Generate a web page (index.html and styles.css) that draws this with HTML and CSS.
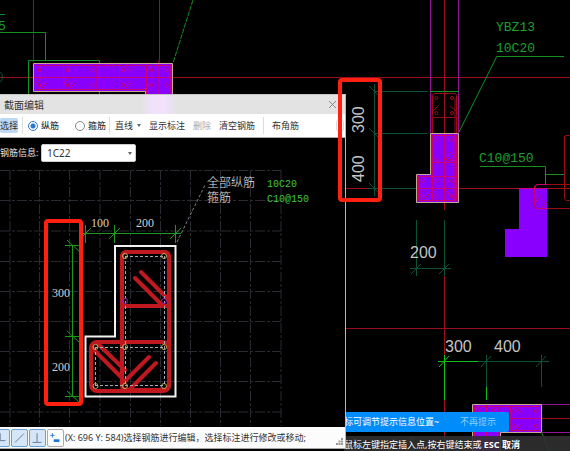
FILE: index.html
```html
<!DOCTYPE html>
<html lang="zh-CN">
<head>
<meta charset="utf-8">
<title>截面编辑</title>
<link rel="stylesheet" href="styles.css">
</head>
<body>
<main class="workspace">
  <svg class="drawing" viewBox="0 0 570 451" preserveAspectRatio="xMinYMin slice" aria-label="柱平面图">
    <!-- axes -->
    <g class="axis">
      <path d="M0 77.500H570M346 188.500H368M458 188.500H570M346 328.500H570M444.500 0V210M444.500 275V355M444.500 400V451"/>
    </g>
    <!-- upper left wall -->
    <path class="teal" d="M33.500 0V62M159.500 0V60"/>
    <path class="green" d="M0 32.500H45.500V60M28.500 94V60.500H99.500V94M0 14.500H5"/>
    <circle class="teal" cx="-4" cy="77" r="6.500"/>
    <path class="green dash" d="M193 0L173 63"/>
    <path class="solid" d="M33.500 63.500H172.500V100H145.500V91.500H33.500Z"/>
    <g class="bar">
      <path d="M35.500 65.500H171V90M35.500 65.500V89.500H147M63.500 65V90M97 65V90M119.500 65V90M146.500 65V94M159 60V94M171 65V94M33 77.500H172"/>
      <circle cx="39.500" cy="70" r="1.500"/><circle cx="67.500" cy="70" r="1.500"/><circle cx="92.500" cy="70" r="1.500"/><circle cx="123" cy="70" r="1.500"/><circle cx="151.500" cy="70" r="1.500"/><circle cx="166.500" cy="70" r="1.500"/>
      <circle cx="39.500" cy="85" r="1.500"/><circle cx="67.500" cy="85" r="1.500"/><circle cx="92.500" cy="85" r="1.500"/><circle cx="123" cy="85" r="1.500"/><circle cx="151.500" cy="85" r="1.500"/><circle cx="166.500" cy="85" r="1.500"/>
      <path d="M36 83L41 78M42 88L47 83M64 83L69 78M70 88L75 83M125 66L131 71M126 88L131 83"/>
    </g>
    <path class="outline" d="M145.500 94V91.500H33.500V63.500H172.500V94"/>
    <text class="cad" x="-2" y="30">5</text>

    <!-- column on the vertical axis -->
    <path class="magenta" d="M430.500 0V133M458.500 0V133"/>
    <path class="green" d="M430 91.500H459M459 132L497 56M497 56.500H564M480 166.500H545.500V185M545.500 174.500H564"/>
    <path class="teal" d="M375 91.500H427M375 133.500H427M374.500 84V196M367 188.500H416M369 86L380 97M369 128L380 139M369 183L380 194"/>
    <g class="deep">
      <rect x="432.500" y="93.500" width="24" height="24" rx="2"/>
      <path d="M432.500 117V133M456.500 117V133M455 98V133M433 111L438 106M450 106L456 111"/>
      <circle cx="436.500" cy="98" r="1.500"/><circle cx="452" cy="98" r="1.500"/><circle cx="436.500" cy="113" r="1.500"/><circle cx="452" cy="113" r="1.500"/>
      <path d="M570 135.500H566Q564.500 135.500 564.500 137V198Q564.500 200.500 567 200.500H570"/>
    </g>
    <path class="solid" d="M430.500 133.500H458.500V202.500H416.500V174.500H430.500Z"/>
    <g class="bar">
      <path d="M432.500 135.500H456.500V200.500H418.500V176.500H457M432.500 135V200M444.500 133V202M432 162.500H457M417 188.500H458M455 135V200"/>
      <circle cx="436.500" cy="139.500" r="1.500"/><circle cx="452" cy="139.500" r="1.500"/><circle cx="436.500" cy="160" r="1.500"/><circle cx="452" cy="160" r="1.500"/>
      <circle cx="422.500" cy="181" r="1.500"/><circle cx="436.500" cy="181" r="1.500"/><circle cx="452" cy="181" r="1.500"/><circle cx="422.500" cy="196.500" r="1.500"/><circle cx="436.500" cy="196.500" r="1.500"/><circle cx="452" cy="196.500" r="1.500"/>
      <path d="M449 151L457 159M444 156L450 162M450 156L444 162M419 195L424 190M424 199L431 192M446 190L455 199"/>
    </g>
    <path class="outline" d="M430.500 133.500H458.500V202.500H416.500V174.500H430.500Z"/>
    <path class="solid" d="M519 188H547V257H505V229H519Z"/>
    <path class="deep" d="M570 184.500H538Q534.500 184.500 534.500 188V205Q534.500 208.500 538 208.500H570"/>
    <path class="bar" d="M547 184.500H538Q534.500 184.500 534.500 188V205Q534.500 208.500 538 208.500H547M535 203L541 196M541 208L547 202M517 188.500H547"/>

    <text class="cad" x="496" y="31">YBZ13</text>
    <text class="cad" x="496" y="52">10C20</text>
    <text class="cad" x="479" y="162">C10@150</text>

    <!-- dimensions -->
    <path class="teal" d="M416.500 220V276M444.500 220V276M410 268.500H451M411 274L421 264M439 274L449 264M478 361.500H549M486.500 355V388M541.500 355V387M481 367L491 356M536 367L546 356"/>
    <path class="bright" d="M444.500 355V400M438 361.500H478M439 367L449 356M486.500 387V400"/>
    <text class="cad dim" x="410" y="258">200</text>
    <text class="cad dim" x="445" y="352">300</text>
    <text class="cad dim" x="494" y="352">400</text>
    <text class="cad dim" transform="translate(364 133) rotate(-90)">300</text>
    <text class="cad dim" transform="translate(364 182) rotate(-90)">400</text>

    <!-- lower wall -->
    <path class="solid" d="M472.500 404.500H541.500V432.500H500.500V452H472.500Z"/>
    <path class="magenta" d="M541 404.500H570M541 432.500H570"/>
    <path class="axis" d="M541 418.500H570"/>
    <g class="bar">
      <path d="M474.500 452V406.500H539.500V430.500H510M472 418.500H541M486.500 405V451M498 406V451M510.500 406V431M497.500 406V418"/>
      <circle cx="478.500" cy="410" r="1.500"/><circle cx="494" cy="410" r="1.500"/><circle cx="514.500" cy="411" r="1.500"/><circle cx="536" cy="411" r="1.500"/><circle cx="514.500" cy="426" r="1.500"/><circle cx="536" cy="426" r="1.500"/>
      <path d="M515 407L522 413M516 430L522 424"/>
    </g>
    <path class="outline" d="M472.500 452V404.500H541.500V432.500H500.500V452"/>
    <path class="green" d="M541.500 432L549 451"/>
    <path class="teal" d="M412.500 436V451"/>
  </svg>

  <div class="prompt">鼠标左键指定插入点,按右键结束或 <b>ESC 取消</b></div>
  <div class="tip"><span>标可调节提示信息位置~</span><button class="tip-off" type="button">不再提示</button></div>

  <section class="dialog" aria-label="截面编辑">
    <header class="titlebar">
      <h1>截面编辑</h1>
      <button class="close" type="button" aria-label="关闭"><svg viewBox="0 0 9 9"><path d="M1 1L8 8M8 1L1 8"/></svg></button>
    </header>
    <div class="toolbar">
      <button class="tool pick" type="button">选择</button>
      <i class="sep"></i>
      <label class="option"><input type="radio" name="kind" checked>纵筋</label>
      <label class="option second"><input type="radio" name="kind">箍筋</label>
      <i class="sep"></i>
      <button class="tool line" type="button">直线<svg viewBox="0 0 4 3"><path d="M0 0H4L2 3Z"/></svg></button>
      <button class="tool" type="button">显示标注</button>
      <button class="tool" type="button" disabled>删除</button>
      <button class="tool" type="button">清空钢筋</button>
      <i class="sep"></i>
      <button class="tool" type="button">布角筋</button>
      <button class="more" type="button" aria-label="更多"><svg viewBox="0 0 8 14"><path d="M6 5L3 7L6 9Z"/></svg></button>
    </div>
    <div class="info">
      <label for="spec">钢筋信息:</label>
      <div class="combo">
        <select id="spec"><option>1C22</option></select>
        <svg viewBox="0 0 4 3"><path d="M0 0H4L2 3Z"/></svg>
      </div>
    </div>
    <svg class="section" viewBox="0 168 346 259" preserveAspectRatio="xMinYMin meet" aria-label="截面图">
      <path class="grid" d="M0 170.500H281M0 200.500H281M0 231H281M0 261.500H281M0 291.500H281M0 321.500H281M0 351.500H281M0 381.500H281M0 412H281"/>
      <path class="grid" d="M10 170V426M39.500 170V426M69.500 170V426M100 170V426M130.500 170V426M160.500 170V426M190.500 170V426M220.500 170V426M250.500 170V426M281 170V426"/>
      <path class="leader" d="M177 242L205 185"/>
      <path class="measure" d="M79 233.500H181M85.500 225V243M114.500 225V243M175.500 225V243M80 239L91 228M109 239L120 228M170 239L181 228M72.500 246V397M65 245.500H81M65 336.500H81M65 396.500H81M67 240L80 252M67 331L80 343M67 391L80 403"/>
      <path class="concrete" d="M115 246H175.500V396.500H85.500V336.500H115Z"/>
      <g class="steel">
        <rect x="122" y="252" width="47" height="138" rx="4"/>
        <path d="M122 306H169"/>
        <rect x="91" y="342" width="78" height="49" rx="6"/>
        <path d="M135 278L161 304M141 272L168 299M92 348L122 378M98 344L125 370M149 357L122 384M156 363L129 390"/>
      </g>
      <path class="inner" d="M125.500 256V386M164.500 256V386M95.500 347V386M125 256.500H164M95 347.500H164M95 385.500H164"/>
      <g class="node">
        <circle cx="125" cy="256" r="2.500"/><circle cx="164" cy="256" r="2.500"/>
        <circle cx="95.500" cy="347" r="2.500"/><circle cx="125" cy="347" r="2.500"/><circle cx="164" cy="347" r="2.500"/>
        <circle cx="95.500" cy="386" r="2.500"/><circle cx="125" cy="386" r="2.500"/><circle cx="164" cy="386" r="2.500"/>
        <circle class="mid" cx="125" cy="301" r="2.500"/><circle class="mid" cx="164" cy="301" r="2.500"/>
      </g>
      <g class="size">
        <text x="91" y="227">100</text><text x="136" y="227">200</text>
        <text x="52" y="297">300</text><text x="52" y="371">200</text>
      </g>
      <g class="note">
        <text x="207" y="187">全部纵筋</text><text x="207" y="202">箍筋</text>
        <text class="value" x="267" y="187">10C20</text><text class="value" x="267" y="202">C10@150</text>
      </g>
    </svg>
    <footer class="status">
      <button class="snap on" type="button" aria-label="正交"><svg viewBox="0 0 17 17"><path d="M7 3V11.500H13"/></svg></button>
      <button class="snap on" type="button" aria-label="直线捕捉"><svg viewBox="0 0 17 17"><path d="M3.500 13.500L13.500 3.500"/></svg></button>
      <button class="snap on" type="button" aria-label="垂足捕捉"><svg viewBox="0 0 17 17"><path d="M8 3V13M3 13.500H13"/></svg></button>
      <button class="snap" type="button" aria-label="坐标输入"><svg viewBox="0 0 17 17"><path class="plus" d="M5 3V8M2.500 5.500H7.500"/><path class="block" d="M6.500 10H13V13H6.500Z"/></svg></button>
      <p>(X: 696 Y: 584)选择钢筋进行编辑，选择标注进行修改或移动;</p>
      <svg class="grip" viewBox="0 0 7 7"><path d="M5 0H7V2H5ZM2.500 2.500H4.500V4.500H2.500ZM5 2.500H7V4.500H5ZM0 5H2V7H0ZM2.500 5H4.500V7H2.500ZM5 5H7V7H5Z"/></svg>
    </footer>
  </section>

  <svg class="marks" viewBox="0 0 570 451" preserveAspectRatio="xMinYMin slice" aria-hidden="true">
    <rect x="340" y="80" width="40" height="120" rx="2"/>
    <rect x="46" y="221" width="35" height="183" rx="2"/>
  </svg>
</main>
</body>
</html>
```
FILE: styles.css
```css
* { box-sizing: border-box; }

body {
  margin: 0;
  background: #000;
  font: 9px/12px "Noto Sans", "Noto Sans CJK SC", sans-serif;
}

button, select {
  margin: 0;
  padding: 0;
  border: 0;
  background: none;
  font: inherit;
  color: inherit;
}

.workspace {
  position: relative;
  min-height: 100vh;
  overflow: hidden;
}

.drawing, .marks {
  position: absolute;
  inset: 0;
  width: 100%;
  height: 100%;
  fill: none;
}

.marks {
  pointer-events: none;
  stroke: #ff2012;
  stroke-width: 4;
}

/* plan drawing */
.axis { stroke: #98101a; }
.teal { stroke: #0c5236; }
.green { stroke: #129020; }
.bright { stroke: #10c018; }
.magenta { stroke: #941298; }
.deep { stroke: #980c12; }
.bar { stroke: #cc0070; }
.solid { fill: #8a00ff; }
.outline { stroke: #c8a890; }
.dash { stroke-dasharray: 5 1; }

.cad {
  fill: #1ca028;
  font: 13px "Liberation Mono", monospace;
}

.dim {
  fill: #c4c4c4;
  font: 16px "Liberation Sans", sans-serif;
}

/* messages */
.prompt, .tip {
  position: absolute;
  left: 344px;
  color: #fff;
  white-space: nowrap;
}

.prompt {
  right: 0;
  bottom: 0;
  height: 15px;
  line-height: 17px;
  background: rgba(48, 48, 48, 0.9);
}

.tip {
  bottom: 19px;
  display: flex;
  justify-content: space-between;
  width: 165px;
  padding-right: 13px;
  border-radius: 2px;
  background: #008cfa;
  line-height: 20px;
}

.tip-off { color: #8fd0ff; }

/* section editor */
.dialog {
  position: absolute;
  left: 0;
  top: 94px;
  display: flex;
  flex-direction: column;
  width: 346px;
  border-right: 1px solid #b8b8b8;
  background: #000;
  color: #333;
}

.titlebar {
  display: flex;
  align-items: center;
  justify-content: space-between;
  height: 20px;
  padding: 0 8px 0 4px;
  border-top: 1px solid #c4c4c4;
  background: linear-gradient(90deg, transparent 141px, #f1e1fb 152px, #f1e1fb 165px, transparent 178px) #e3e3e3;
}

.titlebar h1 {
  margin: 0;
  font-size: 10px;
  font-weight: 400;
}

.close { display: flex; }

.close svg {
  width: 9px;
  height: 9px;
  stroke: #888;
}

.toolbar {
  display: flex;
  align-items: center;
  gap: 8px;
  height: 24px;
  border-bottom: 1px solid #aaa;
  background: #fff;
  white-space: nowrap;
}

.tool:disabled { color: #aaa; }

.pick {
  width: 18px;
  height: 15px;
  margin-right: -4px;
  border-radius: 2px;
  background: #bcd8f4;
}

.sep {
  width: 1px;
  height: 17px;
  background: #ddd;
}

.option {
  display: flex;
  align-items: center;
  gap: 3px;
  margin-left: -3px;
  color: #111;
}

.option.second { margin-left: 8px; }
.option + .sep { margin-left: -5px; }

.option input {
  appearance: none;
  width: 10px;
  height: 10px;
  margin: 0;
  border: 1px solid #888;
  border-radius: 50%;
}

.option input:checked {
  border-color: #3a78c0;
  background: radial-gradient(circle, #2878d0 2px, #fff 3px);
}

.line {
  display: flex;
  align-items: center;
  gap: 4px;
  margin-left: -3px;
}

.line svg, .combo svg {
  width: 4px;
  height: 3px;
  fill: #666;
}

.more {
  display: flex;
  width: 8px;
  margin: 0 1px 0 auto;
  border: 1px solid #ddd;
  border-radius: 3px;
}

.info {
  display: flex;
  align-items: center;
  gap: 3px;
  height: 30px;
  color: #e4e4e4;
}

.info label {
  width: 38px;
  white-space: nowrap;
}

.combo {
  position: relative;
  display: flex;
}

.combo select {
  appearance: none;
  width: 95px;
  height: 18px;
  padding: 0 5px;
  border: 1px solid #ccc;
  border-radius: 2px;
  background: #fff;
  color: #333;
  font-size: 10px;
}

.combo svg {
  position: absolute;
  right: 4px;
  top: 8px;
}

.section {
  width: 346px;
  height: 259px;
  fill: none;
}

.grid { stroke: #2a2a32; stroke-dasharray: 10 2 3 2; }
.leader { stroke: #808080; stroke-dasharray: 3 2; }
.measure { stroke: #1c981c; }
.concrete { stroke: #f2f2f2; stroke-width: 2; }
.steel { stroke: #c0181f; stroke-width: 4; stroke-linecap: round; }
.inner { stroke: #a8a8b8; stroke-dasharray: 3 2; }
.node { stroke: #c4a850; }
.mid { stroke: #a018a8; }
.size { fill: #d0d0d0; font: 12px "Liberation Serif", serif; }
.note { fill: #e4e4e4; font: 300 12px "Noto Sans CJK SC", sans-serif; }
.value { fill: #3cc83c; font: 10px "Liberation Mono", monospace; }

.status {
  display: flex;
  align-items: center;
  gap: 1px;
  height: 22px;
  border-bottom: 1px solid #aaa;
  background: #fcfcfc;
  white-space: nowrap;
}

.status p { margin: 0; }

.snap {
  display: flex;
  flex: none;
  width: 17px;
  height: 18px;
  border: 1px solid #aaa;
  border-radius: 2px;
}

.snap:first-child { margin-left: -7px; }
.snap.on { border-color: #6ca0d4; background: #d4e6f8; }

.snap svg {
  width: 100%;
  fill: none;
  stroke: #5c708c;
}

.snap .plus { stroke: #2878d0; }
.snap .block { fill: #1474d8; stroke: none; }

.grip {
  align-self: flex-end;
  width: 7px;
  height: 7px;
  margin: 0 2px 3px auto;
  fill: #999;
}
```
